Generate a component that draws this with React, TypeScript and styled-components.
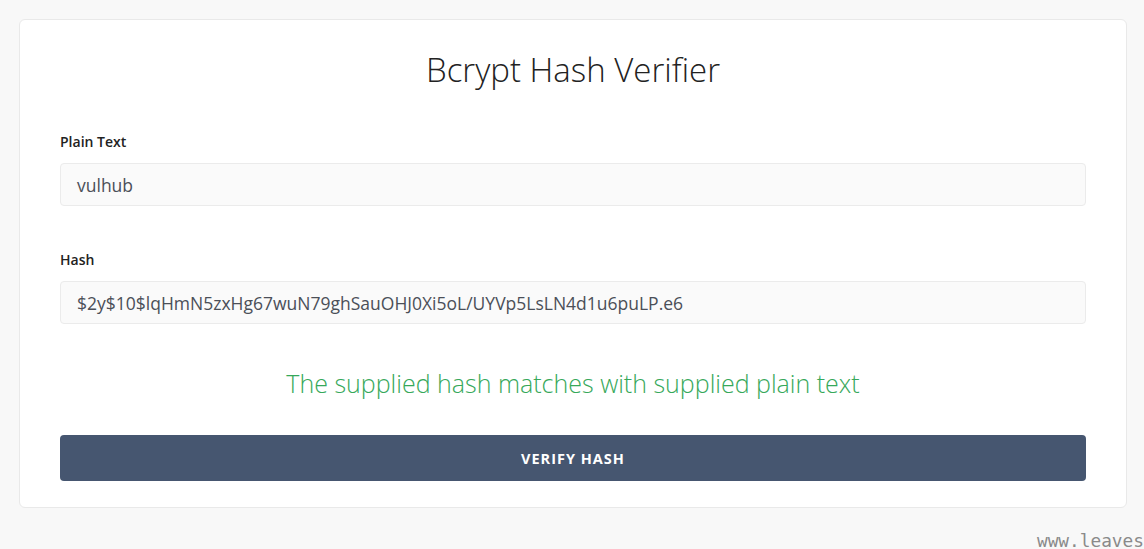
import React from "react";
import styled, { createGlobalStyle } from "styled-components";

const Global = createGlobalStyle`
  html, body { margin: 0; padding: 0; background: #f8f8f8; }
  body { font-family: "Open Sans", "Noto Sans", sans-serif; overflow: hidden; }
  * { box-sizing: border-box; }
`;

const Page = styled.div`
  position: relative;
  width: 1144px;
  height: 549px;
  padding: 19px 17px 0 19px;
`;

const Card = styled.div`
  background: #ffffff;
  border: 1px solid #e9e9e9;
  border-radius: 6px;
  padding: 28px 40px 26px 40px;
  display: flex;
  flex-direction: column;
`;

const Title = styled.h1`
  margin: 0;
  font-weight: 300;
  font-size: 33px;
  line-height: 43px;
  color: #222;
  text-align: center;
`;

const Group = styled.div<{ $top: number }>`
  margin-top: ${(p) => p.$top}px;
  display: flex;
  flex-direction: column;
  gap: 11px;
`;

const Label = styled.label`
  font-size: 14px;
  font-weight: 600;
  line-height: 21px;
  color: #222;
`;

const Input = styled.div`
  height: 43px;
  background: #fafafa;
  border: 1px solid #ebebeb;
  border-radius: 4px;
  padding: 0 16px;
  display: flex;
  align-items: center;
  font-size: 17.5px;
  color: #4b4f58;
`;

const Message = styled.div`
  margin-top: 41px;
  text-align: center;
  font-size: 25px;
  font-weight: 300;
  line-height: 36px;
  color: #36a85a;
`;

const Button = styled.button`
  margin-top: 34px;
  height: 46px;
  border: none;
  border-radius: 4px;
  background: #465670;
  color: #fff;
  font-family: "Open Sans", sans-serif;
  font-size: 14.5px;
  font-weight: 700;
  letter-spacing: 1px;
  text-transform: uppercase;
`;

const Watermark = styled.div`
  position: absolute;
  right: 0;
  top: 530px;
  font-family: "DejaVu Sans Mono", monospace;
  font-size: 17.8px;
  color: #8a8a8a;
  white-space: nowrap;
`;

export default function App() {
  return (
    <>
      <Global />
      <Page>
        <Card>
          <Title>Bcrypt Hash Verifier</Title>
          <Group $top={40}>
            <Label>Plain Text</Label>
            <Input>vulhub</Input>
          </Group>
          <Group $top={43}>
            <Label>Hash</Label>
            <Input>$2y$10$lqHmN5zxHg67wuN79ghSauOHJ0Xi5oL/UYVp5LsLN4d1u6puLP.e6</Input>
          </Group>
          <Message>The supplied hash matches with supplied plain text</Message>
          <Button>Verify Hash</Button>
        </Card>
        <Watermark>www.leaves</Watermark>
      </Page>
    </>
  );
}
